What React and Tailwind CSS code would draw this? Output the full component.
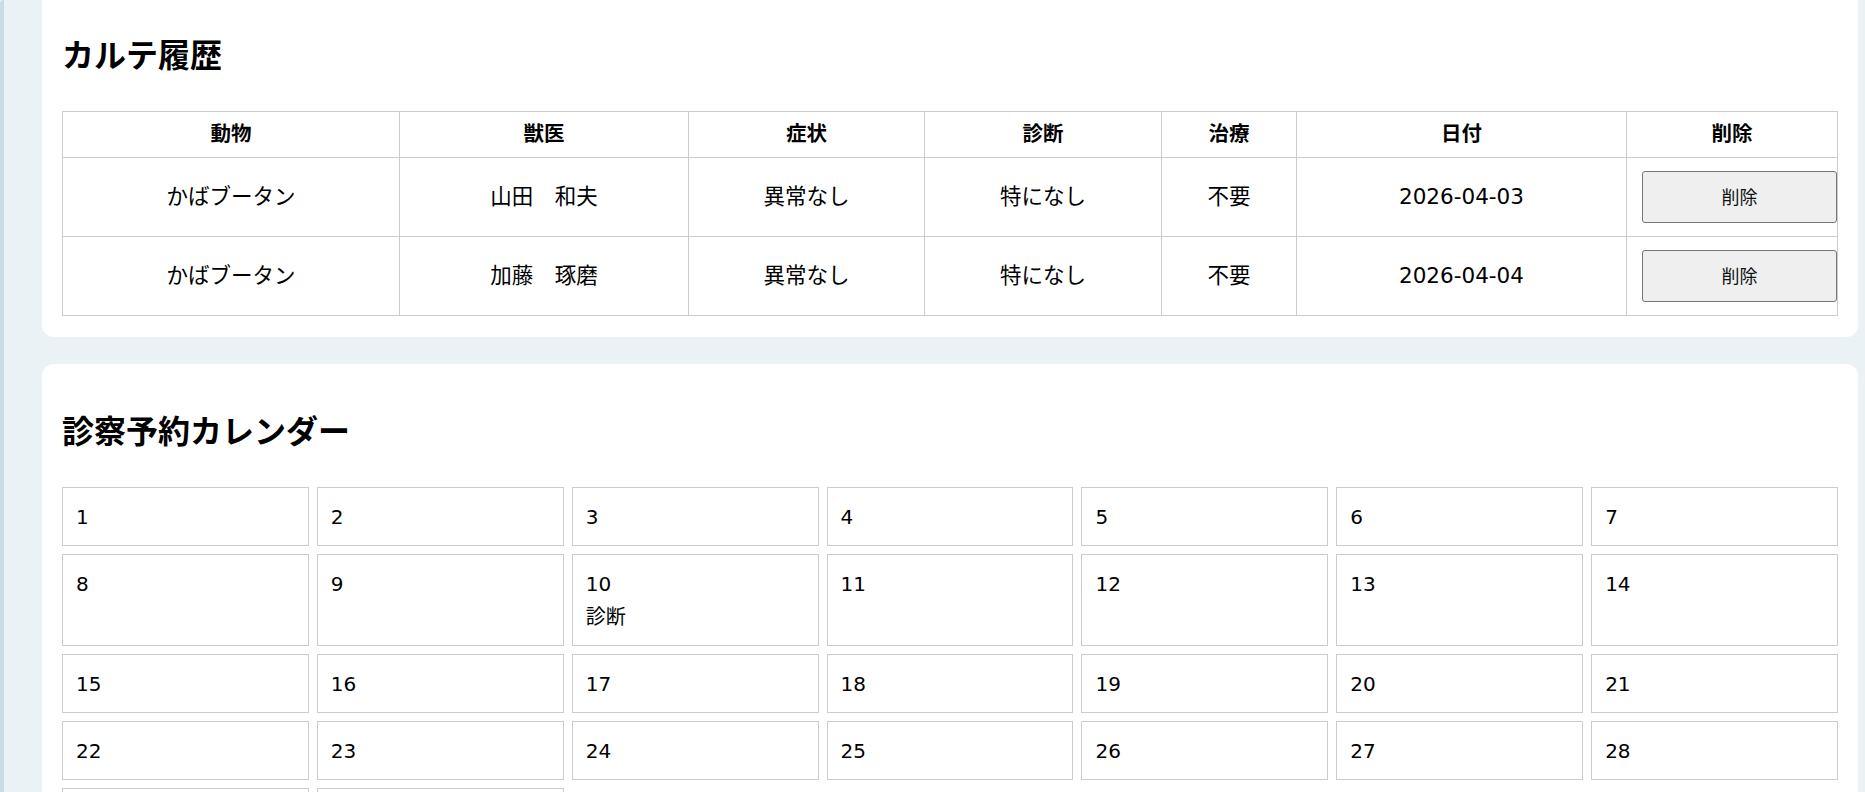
import React from "react";

const records = [
  { animal: "かばブータン", vet: "山田\u3000和夫", symptom: "異常なし", diagnosis: "特になし", treatment: "不要", date: "2026-04-03" },
  { animal: "かばブータン", vet: "加藤\u3000琢磨", symptom: "異常なし", diagnosis: "特になし", treatment: "不要", date: "2026-04-04" },
];

const headers = ["動物", "獣医", "症状", "診断", "治療", "日付", "削除"];
const colWidths = ["w-[337px]", "w-[289px]", "w-[236px]", "w-[237px]", "w-[135px]", "w-[330px]", "w-[211px]"];

const events = { 10: "診断" };

export default function App() {
  const days = Array.from({ length: 30 }, (_, i) => i + 1);

  return (
    <div className="h-[792px] overflow-hidden bg-[#ebf2f6] flex text-black font-['DejaVu_Sans','Noto_Sans_CJK_JP',sans-serif]">
      <div className="w-[4px] shrink-0 bg-[#c6dde3] rounded-tl-[6px]"></div>

      <div className="flex-1 pl-[38px] pr-[8px] flex flex-col gap-[27px]">
        {/* カルテ履歴 */}
        <section className="bg-white rounded-b-[12px] px-[20px] pt-[34px] pb-[21px]">
          <h2 className="text-[32px] leading-[45px] font-bold">カルテ履歴</h2>
          <table className="mt-[32px] w-full table-fixed border-collapse">
            <colgroup>
              {colWidths.map((w, i) => (
                <col key={i} className={w} />
              ))}
            </colgroup>
            <thead>
              <tr className="h-[46px]">
                {headers.map((h) => (
                  <th key={h} className="border border-[#cccccc] text-[20.5px] font-bold text-center align-middle">
                    {h}
                  </th>
                ))}
              </tr>
            </thead>
            <tbody className="text-[21.5px]">
              {records.map((r, i) => (
                <tr key={i} className="h-[79px]">
                  <td className="border border-[#cccccc] text-center align-middle">{r.animal}</td>
                  <td className="border border-[#cccccc] text-center align-middle">{r.vet}</td>
                  <td className="border border-[#cccccc] text-center align-middle">{r.symptom}</td>
                  <td className="border border-[#cccccc] text-center align-middle">{r.diagnosis}</td>
                  <td className="border border-[#cccccc] text-center align-middle">{r.treatment}</td>
                  <td className="border border-[#cccccc] text-center align-middle">{r.date}</td>
                  <td className="border border-[#cccccc] align-middle p-0">
                    <button className="ml-[15px] w-[195px] h-[52px] bg-[#efefef] border border-[#767676] rounded-[3px] text-[18px] text-[#111]">
                      削除
                    </button>
                  </td>
                </tr>
              ))}
            </tbody>
          </table>
        </section>

        {/* 診察予約カレンダー */}
        <section className="bg-white rounded-t-[12px] px-[20px] pt-[46px] flex-1">
          <h2 className="text-[32px] leading-[45px] font-bold">診察予約カレンダー</h2>
          <div className="mt-[32px] grid grid-cols-7 gap-[8px] text-[20px]">
            {days.map((d) => (
              <div key={d} className="border border-[#cccccc] px-[13px] py-[12.5px]">
                <div className="leading-[32px]">{d}</div>
                {events[d] && <div className="leading-[32px] mt-[1px]">{events[d]}</div>}
              </div>
            ))}
          </div>
        </section>
      </div>
    </div>
  );
}
